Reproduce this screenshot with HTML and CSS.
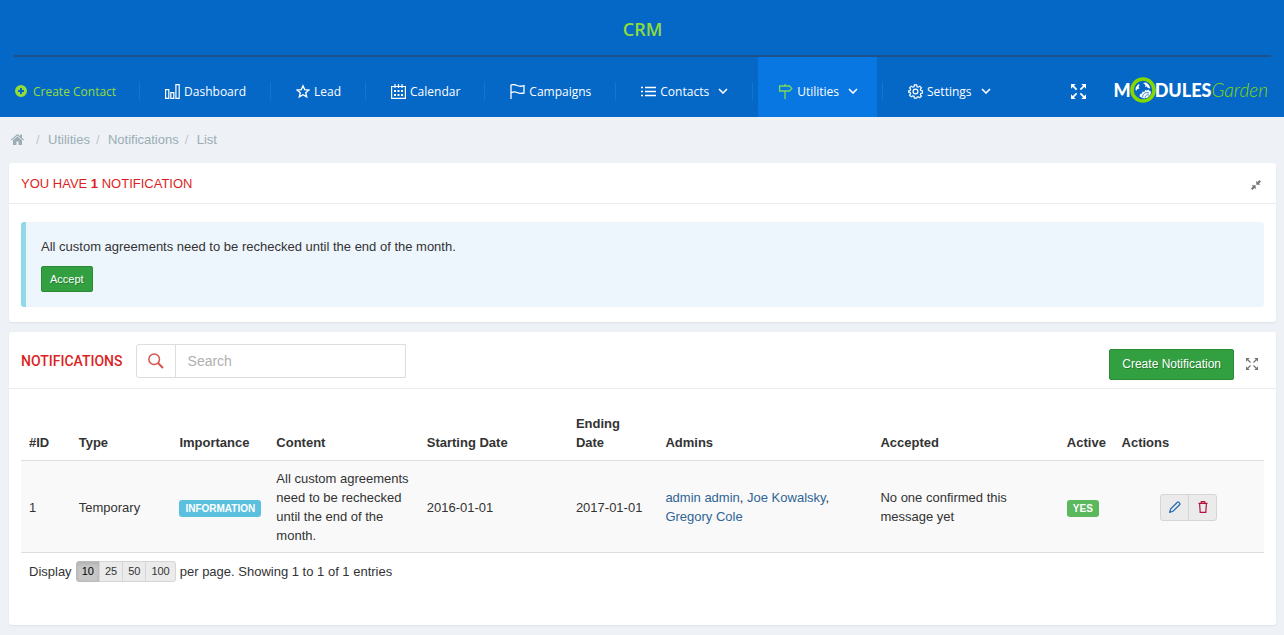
FILE: index.html
```html
<!DOCTYPE html>
<html lang="en">
<head>
<meta charset="utf-8">
<title>CRM - Notifications</title>
<link rel="stylesheet" href="styles.css">
</head>
<body>
<svg class="sprite" aria-hidden="true">
  <symbol id="i-expand" viewBox="0 0 16 16">
    <path d="M0 0h5L0 5zM16 0v5L11 0zM0 16v-5l5 5zM16 16h-5l5-5z" fill="currentColor"/>
    <path d="M1.500 1.500L6 6M14.500 1.500L10 6M1.500 14.500L6 10M14.500 14.500L10 10" stroke="currentColor" stroke-width="1.800"/>
  </symbol>
  <symbol id="i-caret" viewBox="0 0 10 6">
    <path d="M1 1l4 4 4-4" fill="none" stroke="currentColor" stroke-width="1.600"/>
  </symbol>
</svg>

<header class="header">
  <h1 class="brand">CRM</h1>
  <div class="bar">
    <nav aria-label="Main">
      <ul class="nav">
        <li class="nav-item"><a class="nav-link create" href="#">
          <svg class="icon-plus" viewBox="0 0 12 12"><path d="M6 0a6 6 0 100 12A6 6 0 006 0zM5 3h2v2h2v2H7v2H5V7H3V5h2z" fill="currentColor" fill-rule="evenodd"/></svg>
          Create Contact</a></li>
        <li class="nav-item"><a class="nav-link" href="#">
          <svg class="icon" viewBox="0 0 15 15"><path d="M.600 5.600h3.200v8.800H.600zM5.800 8.600h3v5.800h-3zM10.900.600h3.300v13.800h-3.300z" fill="none" stroke="currentColor" stroke-width="1.200"/></svg>
          Dashboard</a></li>
        <li class="nav-item"><a class="nav-link" href="#">
          <svg class="icon star" viewBox="0 0 14 14"><path d="M7 1.300l1.700 3.800 4.200.400-3.200 2.700 1 4.200L7 10.200l-3.700 2.200 1-4.200L1.100 5.500l4.200-.400z" fill="none" stroke="currentColor" stroke-width="1.300"/></svg>
          Lead</a></li>
        <li class="nav-item"><a class="nav-link" href="#">
          <svg class="icon" viewBox="0 0 15 15"><path d="M.600 2.500h13.800v11.900H.600zM4 0v4M7.500 0v4M11 0v4" fill="none" stroke="currentColor" stroke-width="1.200"/><path d="M3 6h2v2H3zM6.500 6h2v2h-2zM10 6h2v2h-2zM3 10h2v2H3zM6.500 10h2v2h-2zM10 10h2v2h-2z" fill="currentColor"/></svg>
          Calendar</a></li>
        <li class="nav-item"><a class="nav-link" href="#">
          <svg class="icon" viewBox="0 0 15 15"><path d="M1 15V1c2-.700 4-.500 6 .500s4 1 7 .200V9c-3 .700-5 .500-7-.500S3 7.800 1 8.800" fill="none" stroke="currentColor" stroke-width="1.300"/></svg>
          Campaigns</a></li>
        <li class="nav-item"><a class="nav-link" href="#">
          <svg class="icon" viewBox="0 0 15 15"><path d="M0 3.500h2M4 3.500h11M0 7.500h2M4 7.500h11M0 11.500h2M4 11.500h11" stroke="currentColor" stroke-width="1.400"/></svg>
          Contacts <svg class="caret"><use href="#i-caret"/></svg></a></li>
        <li class="nav-item"><a class="nav-link active" href="#">
          <svg class="icon sign" viewBox="0 0 15 15"><path d="M1.600 2h9.800l2.400 2.500L11.400 7H1.600zM7 0v2M7 7v8" fill="none" stroke="currentColor" stroke-width="1.300"/></svg>
          Utilities <svg class="caret"><use href="#i-caret"/></svg></a></li>
        <li class="nav-item"><a class="nav-link" href="#">
          <svg class="icon" viewBox="0 0 16 16"><path d="M6.800 1h2.400l.400 1.900 1.300.500 1.700-1.100 1.700 1.700-1.100 1.700.500 1.300 1.800.300v2.300l-1.800.400-.500 1.300 1.100 1.700-1.700 1.700-1.700-1.100-1.300.500L9.200 15H6.800l-.400-1.900-1.300-.500-1.700 1.100L1.700 12l1.100-1.700-.500-1.300L.700 8.700V7.300L2.300 7l.500-1.300L1.700 4l1.700-1.700 1.700 1.100 1.300-.500z" fill="none" stroke="currentColor" stroke-width="1.300"/><circle cx="8" cy="8" r="2.600" fill="none" stroke="currentColor" stroke-width="1.300"/></svg>
          Settings <svg class="caret"><use href="#i-caret"/></svg></a></li>
      </ul>
    </nav>
    <div class="tools">
      <button class="plain" type="button" aria-label="Full screen"><svg class="icon"><use href="#i-expand"/></svg></button>
      <a class="logo" href="#" aria-label="ModulesGarden">
        <span class="logo-bold">M</span>
        <svg class="logo-ring" viewBox="0 0 26 26"><circle cx="13" cy="13" r="11" fill="#0568c7" stroke="#84d800" stroke-width="3.600"/><path d="M5.500 12.500c0-2.500 1-4 3.500-5.500l.500 1.500-1 1 1 2-2 .500-1.500 2zM13 6l3-.500 3 2.500 1.500 3.500-2.500-.500-1.500-1.500-1.500.500.500-2zM9.500 19.500l.500-2.500 2-.500.500-2 2 .500.500-2 2 .500 1.500-1 1 1.500 1.500.500-.500 3-3 3-3.500 1z" fill="#fff"/><path d="M12.500 20a4.500 4.500 0 016.500-4M15 20.500a3 3 0 014-2.500" fill="none" stroke="#0568c7" stroke-width=".800"/></svg>
        <span class="logo-bold">DULES</span><span class="logo-light">Garden</span>
      </a>
    </div>
  </div>
</header>

<main class="page">
  <nav aria-label="Breadcrumb">
    <ol class="crumbs">
      <li><a href="#" aria-label="Home"><svg class="home" viewBox="0 0 13 11"><path d="M6.500 0L0 5.600l.700.800L6.500 1.500l5.800 4.900.700-.800-2-1.700V.600H9.200v1.700zM6.500 2.500L2 6.300V11h3.400V7.600h2.200V11H11V6.300z" fill="currentColor"/></svg></a></li>
      <li><a href="#">Utilities</a></li>
      <li><a href="#">Notifications</a></li>
      <li>List</li>
    </ol>
  </nav>

  <section class="panel">
    <div class="panel-head">
      <h2 class="title">YOU HAVE <b>1</b> NOTIFICATION</h2>
      <button class="plain gray" type="button" aria-label="Collapse"><svg class="collapse" viewBox="0 0 10 10"><path d="M5.300 4.700V.700l1.300 1.200L8.500 0 10 1.500 8.100 3.400l1.200 1.300zM4.700 5.300v4L3.400 8.100 1.500 10 0 8.500l1.900-1.900L.700 5.300z" fill="currentColor"/></svg></button>
    </div>
    <div class="panel-body">
      <div class="notice">
        <p>All custom agreements need to be rechecked until the end of the month.</p>
        <button class="btn small" type="button">Accept</button>
      </div>
    </div>
  </section>

  <section class="panel">
    <div class="panel-head list-head">
      <h2 class="title strong">NOTIFICATIONS</h2>
      <label class="search">
        <span class="search-icon"><svg viewBox="0 0 16 16"><circle cx="6.200" cy="6.200" r="5.300" fill="none" stroke="currentColor" stroke-width="1.500"/><path d="M10 10l5 5" stroke="currentColor" stroke-width="1.900"/></svg></span>
        <input type="text" placeholder="Search" aria-label="Search">
      </label>
      <div class="head-actions">
        <button class="btn" type="button">Create Notification</button>
        <button class="plain gray" type="button" aria-label="Expand"><svg class="expand"><use href="#i-expand"/></svg></button>
      </div>
    </div>
    <div class="panel-body list-body">
      <table class="table">
        <colgroup><col class="c-id"><col class="c-type"><col class="c-imp"><col class="c-content"><col class="c-start"><col class="c-end"><col class="c-admins"><col class="c-accepted"><col class="c-active"><col></colgroup>
        <thead>
          <tr><th>#ID</th><th>Type</th><th>Importance</th><th>Content</th><th>Starting Date</th><th>Ending Date</th><th>Admins</th><th>Accepted</th><th>Active</th><th>Actions</th></tr>
        </thead>
        <tbody>
          <tr>
            <td>1</td><td>Temporary</td><td><span class="tag info">INFORMATION</span></td>
            <td>All custom agreements need to be rechecked until the end of the month.</td>
            <td>2016-01-01</td><td>2017-01-01</td>
            <td><a href="#">admin admin</a>, <a href="#">Joe Kowalsky</a>, <a href="#">Gregory Cole</a></td>
            <td>No one confirmed this message yet</td>
            <td><span class="tag yes">YES</span></td>
            <td><div class="actions">
              <button class="edit" type="button" aria-label="Edit"><svg viewBox="0 0 12 12"><path d="M.700 11.300l.900-3.300L8.400 1.200c1-.900 3.200 1.200 2.400 2.300L4 10.300z" fill="none" stroke="currentColor" stroke-width="1.300"/></svg></button>
              <button class="delete" type="button" aria-label="Delete"><svg viewBox="0 0 12 12"><path d="M1.500 2.400h9M4.300 2.200V.700h3.400v1.500M2.600 2.600l.600 8.700h5.600l.600-8.700" fill="none" stroke="currentColor" stroke-width="1.200"/></svg></button>
            </div></td>
          </tr>
        </tbody>
      </table>
      <div class="pager">
        <span>Display</span>
        <div class="sizes"><button class="current" type="button">10</button><button type="button">25</button><button type="button">50</button><button type="button">100</button></div>
        <span>per page. Showing 1 to 1 of 1 entries</span>
      </div>
    </div>
  </section>
</main>
</body>
</html>
```
FILE: styles.css
```css
* { box-sizing: border-box; }

body {
  margin: 0;
  background: #eef2f7;
  color: #333;
  font: 13px/19px "Liberation Sans", Arial, sans-serif;
}

a { color: inherit; text-decoration: none; }
button { font: inherit; cursor: pointer; }
svg { display: block; flex: none; }
.sprite { position: absolute; width: 0; height: 0; }

/* Header */
.header {
  padding: 0 13px 0 14px;
  background: #0568c7;
  color: #fff;
  font-family: "Open Sans", sans-serif;
}

.brand {
  margin: 0;
  padding-top: 5px;
  height: 55px;
  color: #8edc3c;
  font-size: 18px;
  font-weight: 600;
  line-height: 48px;
  text-align: center;
}

.bar {
  display: flex;
  justify-content: space-between;
  border-top: 2px solid #1e5186;
}

.nav {
  display: flex;
  margin: 0;
  padding: 0;
  font-size: 12px;
  list-style: none;
}

.nav-item { display: flex; align-items: center; }

.nav-item:not(:last-child)::after {
  content: "";
  width: 1px;
  height: 18px;
  margin: 7px 5px 0;
  background: #0d76de;
}

.nav-link {
  display: flex;
  align-items: center;
  gap: 4px;
  height: 60px;
  padding: 8px 19px 0 20px;
  white-space: nowrap;
}

.nav-link.create { padding: 8px 18px 0 1px; gap: 6px; color: #93dd38; }
.nav-link.active { background: #0877e1; }
.icon { width: 15px; height: 15px; }
.icon-plus { width: 12px; height: 12px; }
.star { width: 14px; }
.sign { color: #7ed957; }
.caret { width: 10px; height: 6px; margin-left: 5px; }

.tools { display: flex; align-items: center; gap: 28px; padding-top: 8px; }

.plain {
  display: flex;
  padding: 0;
  border: 0;
  background: none;
  color: inherit;
}

.gray { color: #777; }

.logo {
  display: flex;
  align-items: center;
  margin: -3px 3px 0 0;
  height: 26px;
  font-family: Lato, sans-serif;
  font-size: 19px;
  line-height: 26px;
}

.logo-bold { font-size: 18px; font-weight: 900; }
.logo-ring { width: 26px; height: 26px; margin: 0 -1px; }
.logo-light { color: #84d800; font-style: italic; font-weight: 300; }

/* Page */
.page { padding: 0 8px 9px 9px; }

.crumbs {
  display: flex;
  align-items: center;
  height: 46px;
  margin: 0;
  padding: 0 0 2px 2px;
  color: #9aacb4;
  list-style: none;
}

.crumbs li { display: flex; align-items: center; }
.crumbs li + li::before { content: "/"; width: 12px; margin-left: 6px; color: #bcc6cc; }
.crumbs li:first-child { margin-right: 6px; }
.home { width: 13px; height: 11px; }

.panel {
  margin-bottom: 10px;
  border-radius: 3px;
  background: #fff;
  box-shadow: 0 1px 2px #dde2e8;
}

.panel:last-child { margin-bottom: 0; }

.panel-head {
  display: flex;
  align-items: center;
  justify-content: space-between;
  min-height: 41px;
  padding: 0 15px 0 12px;
  border-bottom: 1px solid #ebebeb;
}

.title { margin: 0; color: #dc1f26; font-size: 13px; font-weight: 400; }
.strong { font-family: Roboto, sans-serif; font-size: 14px; font-weight: 500; }
.collapse { width: 10px; height: 10px; margin-top: 3px; }
.panel-body { padding: 18px 12px 15px; }

.notice {
  padding: 15px;
  border-left: 5px solid #91d9e8;
  border-radius: 3px;
  background: #eef6fd;
}

.notice p { margin: 0 0 10px; }

.btn {
  height: 31px;
  padding: 0 12px;
  border: 1px solid #2a8a36;
  border-radius: 2px;
  background: #32a041;
  color: #fff;
  font-size: 12px;
  text-shadow: 1px 1px 0 #237a2e;
}

.small { display: block; height: 26px; padding: 0 8px; font-size: 11px; }

.list-head {
  justify-content: flex-start;
  gap: 13px;
  min-height: 57px;
  padding-top: 2px;
  padding-right: 18px;
}

.search { display: flex; width: 270px; height: 34px; border: 1px solid #ddd; border-radius: 3px 0 0 3px; }

.search-icon {
  display: flex;
  align-items: center;
  justify-content: center;
  width: 39px;
  border-right: 1px solid #ddd;
  color: #d9534f;
}

.search-icon svg { width: 16px; height: 16px; }

.search input {
  flex: 1;
  min-width: 0;
  padding: 0 12px;
  border: 0;
  background: none;
  font: 14px "Liberation Sans", Arial, sans-serif;
}

.search input::placeholder { color: #b0b0b0; }
.head-actions { display: flex; align-items: center; gap: 12px; margin: 6px 0 0 auto; }
.expand { width: 12px; height: 12px; }
.list-body { padding: 17px 12px 43px; }

.table { width: 100%; border-collapse: collapse; table-layout: fixed; }
.c-id { width: 4%; }
.c-type { width: 8.1%; }
.c-imp { width: 7.8%; }
.c-content { width: 12.1%; }
.c-start { width: 12%; }
.c-end { width: 7.2%; }
.c-admins { width: 17.3%; }
.c-accepted { width: 15%; }
.c-active { width: 4.4%; }

.table th { padding: 8px; border-bottom: 1px solid #ddd; text-align: left; vertical-align: bottom; }
.table td { padding: 8px 8px 7px; border-bottom: 1px solid #ddd; background: #f9f9f9; }
.table td a { color: #2f6496; }

.tag {
  display: inline-block;
  padding: 0 6px;
  border-radius: 3px;
  color: #fff;
  font-size: 10px;
  font-weight: 700;
  line-height: 17px;
  vertical-align: middle;
}

.info { background: #5bc0de; }
.yes { background: #5cb85c; }

.actions { display: flex; justify-content: center; }

.actions button,
.sizes button {
  display: flex;
  align-items: center;
  justify-content: center;
  border: 1px solid #d5d5d5;
  background: #ebebeb;
}

.actions button { width: 29px; height: 27px; padding: 0; }
.actions svg { width: 12px; height: 12px; }
.actions button + button,
.sizes button + button { margin-left: -1px; }
.actions button:first-child,
.sizes button:first-child { border-radius: 3px 0 0 3px; }
.actions button:last-child,
.sizes button:last-child { border-radius: 0 3px 3px 0; }
.edit { color: #2a6bb0; }
.delete { color: #b5123e; }

.pager { display: flex; align-items: center; gap: 4px; padding: 8px 8px 0; }
.sizes { display: flex; }
.sizes button { height: 21px; padding: 0 5px; color: #333; font-size: 11px; }
.sizes .current { border-color: #bbb; background: #c8c8c8; color: #000; box-shadow: inset 0 2px 4px #b0b0b0; }
```
